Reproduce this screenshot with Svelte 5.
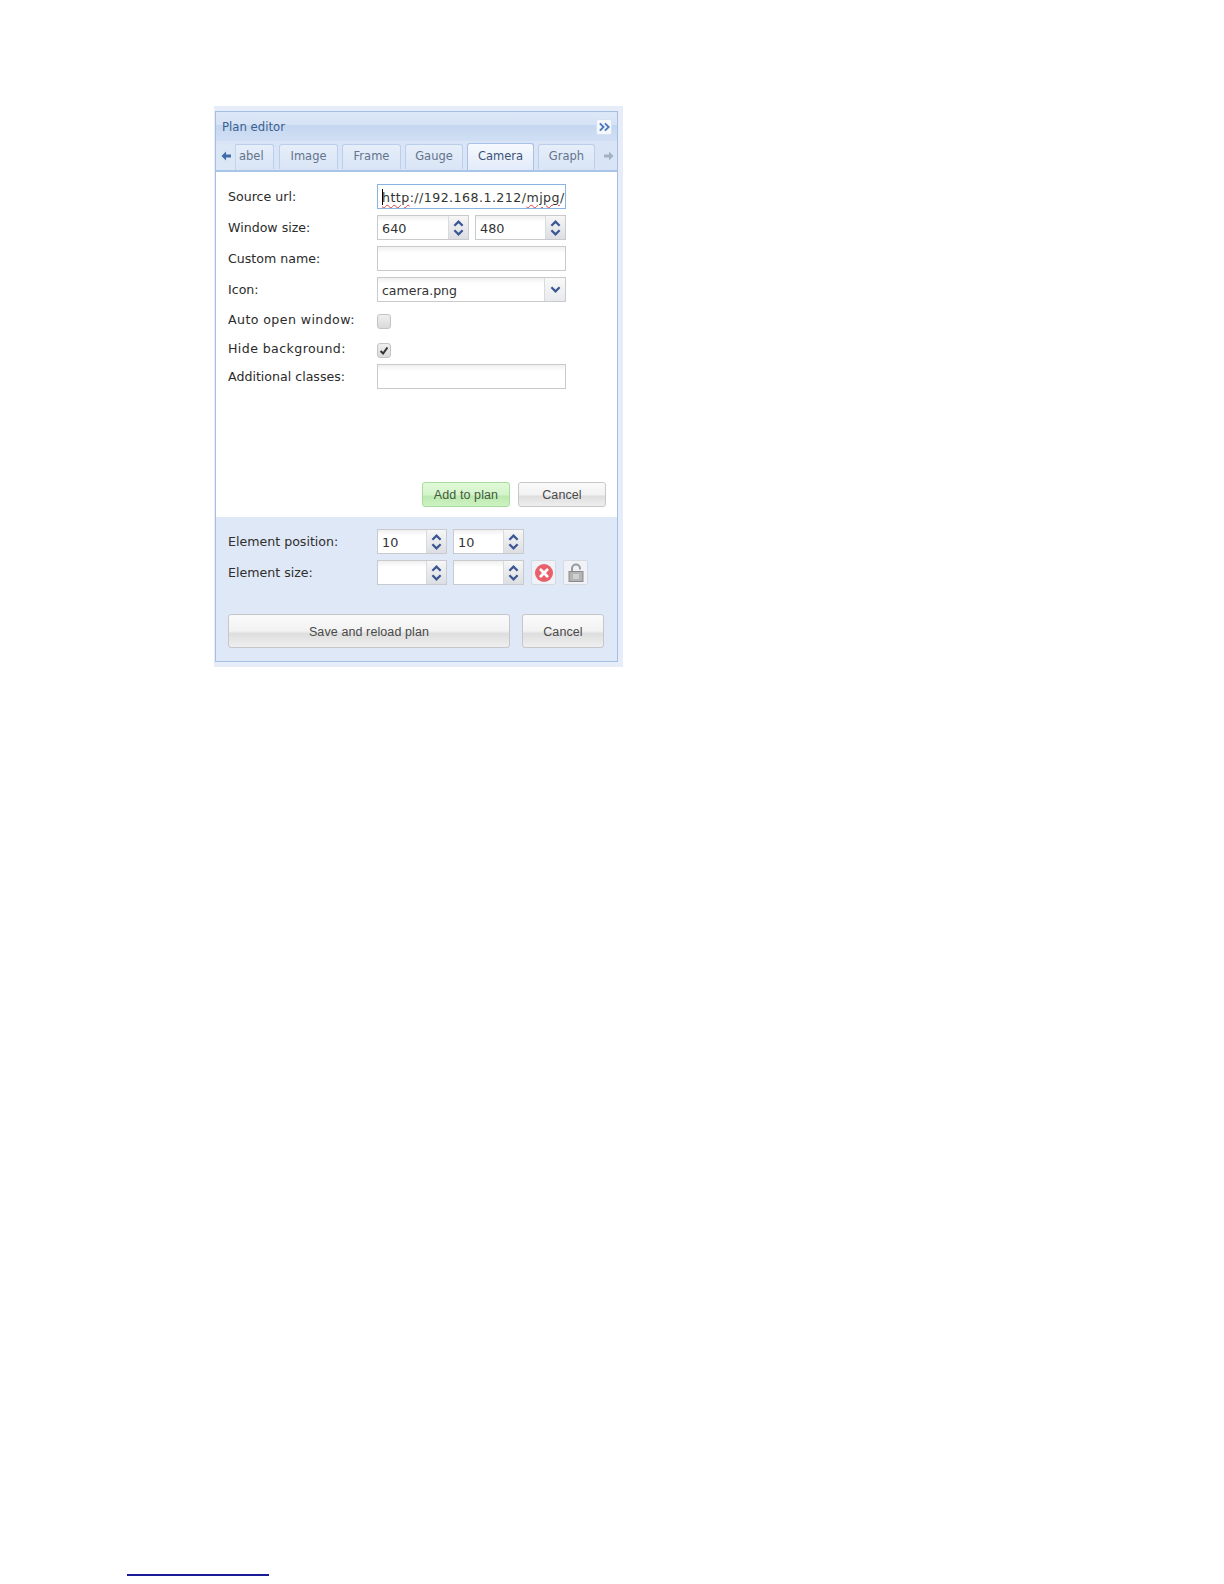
<script>
	const tabs = [
		{ label: 'abel', width: 38, clipped: true },
		{ label: 'Image', width: 59 },
		{ label: 'Frame', width: 59 },
		{ label: 'Gauge', width: 58 },
		{ label: 'Camera', width: 67, active: true },
		{ label: 'Graph', width: 57 }
	];
</script>

{#snippet spinner(value, width)}
	<span class="spinner" style="width: {width}px">
		<span class="spinner-value">{value}</span>
		<span class="spinner-arrows">
			<svg viewBox="0 0 12 9" class="arrow"><path d="M1.5 7 L6 2.5 L10.5 7" /></svg>
			<svg viewBox="0 0 12 9" class="arrow"><path d="M1.5 2 L6 6.5 L10.5 2" /></svg>
		</span>
	</span>
{/snippet}

<div class="page">
	<div class="halo">
		<div class="panel">
			<div class="title-bar">
				<span class="title">Plan editor</span>
				<button class="collapse" type="button" aria-label="Collapse">
					<svg viewBox="0 0 14 12"><path d="M2 2 L6 6 L2 10 M7.5 2 L11.5 6 L7.5 10" /></svg>
				</button>
			</div>

			<div class="tab-bar">
				<span class="scroll left">
					<svg viewBox="0 0 12 12"><path d="M6 1.5 L1.5 6 L6 10.5 V7.6 H11 V4.4 H6 Z" /></svg>
				</span>
				{#each tabs as tab}
					<span class="tab" class:active={tab.active} class:clipped={tab.clipped} style="width: {tab.width}px">{tab.label}</span>
				{/each}
				<span class="scroll right">
					<svg viewBox="0 0 12 12"><path d="M6 1.5 L10.5 6 L6 10.5 V7.6 H1 V4.4 H6 Z" /></svg>
				</span>
			</div>

			<div class="form">
				<div class="row">
					<span class="label">Source url:</span>
					<span class="input focused"><span class="caret"></span><span class="misspelled">http</span>://192.168.1.212/<span class="misspelled">mjpg</span>/</span>
				</div>
				<div class="row">
					<span class="label">Window size:</span>
					<span class="fields">
						{@render spinner('640', 92)}
						{@render spinner('480', 91)}
					</span>
				</div>
				<div class="row">
					<span class="label">Custom name:</span>
					<span class="input"></span>
				</div>
				<div class="row">
					<span class="label">Icon:</span>
					<span class="combo">
						<span class="combo-value">camera.png</span>
						<span class="combo-trigger">
							<svg viewBox="0 0 12 9" class="arrow"><path d="M1.5 2 L6 6.5 L10.5 2" /></svg>
						</span>
					</span>
				</div>
				<div class="row check-row">
					<span class="label">Auto open window:</span>
					<span class="checkbox"></span>
				</div>
				<div class="row check-row last-check">
					<span class="label">Hide background:</span>
					<span class="checkbox">
						<svg viewBox="0 0 14 14"><path d="M3 7.5 L6 10.5 L11 3.5" /></svg>
					</span>
				</div>
				<div class="row">
					<span class="label">Additional classes:</span>
					<span class="input"></span>
				</div>

				<div class="form-actions">
					<button class="button green" type="button">Add to plan</button>
					<button class="button cancel-small" type="button">Cancel</button>
				</div>
			</div>

			<div class="footer">
				<div class="row">
					<span class="label">Element position:</span>
					<span class="fields">
						{@render spinner('10', 70)}
						{@render spinner('10', 71)}
					</span>
				</div>
				<div class="row">
					<span class="label">Element size:</span>
					<span class="fields">
						{@render spinner('', 70)}
						{@render spinner('', 71)}
						<span class="icon-button first-icon">
							<svg viewBox="0 0 20 20">
								<circle cx="10" cy="10" r="9" fill="#e8606a" />
								<path d="M6.8 6.8 L13.2 13.2 M13.2 6.8 L6.8 13.2" stroke="#fff" stroke-width="2.8" stroke-linecap="round" />
							</svg>
						</span>
						<span class="icon-button">
							<svg viewBox="0 0 20 20">
								<path d="M6 9 V5.5 A4 4 0 0 1 14 5.5 V6.5" fill="none" stroke="#9a9a9a" stroke-width="2" />
								<rect x="3" y="8.5" width="14" height="10" fill="#b4b4b4" stroke="#8a8a8a" />
								<rect x="7" y="11" width="6" height="5" fill="#d0d0d0" />
							</svg>
						</span>
					</span>
				</div>

				<div class="footer-actions">
					<button class="button save" type="button">Save and reload plan</button>
					<button class="button cancel" type="button">Cancel</button>
				</div>
			</div>
		</div>
	</div>

	<div class="footnote-rule"></div>
</div>

<style>
	:global(body) {
		margin: 0;
		background: #fff;
	}

	.page {
		box-sizing: border-box;
		height: 1584px;
		padding: 106px 0 0 214px;
		font-family: "DejaVu Sans", sans-serif;
		position: relative;
	}

	.halo {
		box-sizing: border-box;
		width: 409px;
		height: 561px;
		padding: 5px 5px 5px 1px;
		background: #e6edf8;
	}

	.panel {
		box-sizing: border-box;
		height: 551px;
		border: 1px solid #a3bfe4;
		background: #dfe8f6;
		display: flex;
		flex-direction: column;
	}

	.title-bar {
		height: 29px;
		flex: none;
		box-sizing: border-box;
		padding: 0 5px 0 6px;
		display: flex;
		align-items: center;
		justify-content: space-between;
		background: linear-gradient(#dde8f7 0, #d6e3f5 44%, #c4d7f0 46%, #d0dff4 100%);
	}

	.title {
		font-size: 11.7px;
		color: #3c5f92;
		padding-top: 1px;
	}

	.collapse {
		width: 16px;
		height: 16px;
		padding: 0;
		border: 1px solid #d5e2f3;
		border-radius: 2px;
		background: #f4f8fd;
		display: flex;
		align-items: center;
		justify-content: center;
	}

	.collapse svg {
		width: 13px;
		height: 12px;
		fill: none;
		stroke: #4a78bd;
		stroke-width: 2;
	}

	.tab-bar {
		height: 31px;
		flex: none;
		box-sizing: border-box;
		display: flex;
		align-items: flex-end;
		gap: 4px;
		border-bottom: 2px solid #a9c4e8;
		background: #d9e5f6;
	}

	.scroll {
		width: 20px;
		height: 26px;
		flex: none;
		display: flex;
		align-items: center;
		justify-content: center;
		padding-bottom: 2px;
		box-sizing: border-box;
		background: #dce7f6;
	}

	.scroll svg {
		width: 12px;
		height: 12px;
	}

	.scroll.left {
		margin-right: -4px;
		border-right: 1px solid #c2d4ee;
	}

	.scroll.left svg {
		fill: #3f6ba8;
	}

	.scroll.right {
		background: none;
	}

	.scroll.right svg {
		fill: #a3b1c4;
	}

	.tab {
		box-sizing: border-box;
		height: 25px;
		flex: none;
		border: 1px solid #bccfea;
		border-bottom: none;
		border-radius: 3px 3px 0 0;
		margin-bottom: 1px;
		padding-bottom: 2px;
		background: linear-gradient(#e6eef9, #d9e5f6);
		color: #64748c;
		font-size: 11.5px;
		display: flex;
		align-items: center;
		justify-content: center;
	}

	.tab.clipped {
		border-left: none;
		border-radius: 0 3px 0 0;
		justify-content: flex-start;
		padding-left: 3px;
		margin-right: 1px;
	}

	.tab.active {
		height: 27px;
		margin-bottom: 0;
		padding-bottom: 2px;
		border-color: #a7c2e6;
		background: linear-gradient(#f6f9fe, #e2ebf9);
		color: #3c5378;
	}

	.form {
		flex: none;
		height: 345px;
		box-sizing: border-box;
		padding: 12px 11px 0 12px;
		background: #fff;
		display: flex;
		flex-direction: column;
	}

	.row {
		display: flex;
		align-items: center;
		height: 25px;
		margin-bottom: 6px;
	}

	.check-row {
		height: 15px;
		margin: 6px 0 8px;
	}

	.last-check {
		margin-bottom: 6px;
	}

	.label {
		width: 149px;
		flex: none;
		font-size: 12.6px;
		color: #2b2b2b;
	}

	.check-row .label {
		position: relative;
		top: -2px;
		letter-spacing: 0.4px;
	}

	.fields {
		display: flex;
		gap: 6px;
		align-items: center;
	}

	.input {
		box-sizing: border-box;
		width: 189px;
		height: 25px;
		border: 1px solid #c8cacd;
		background: linear-gradient(#f0f0f0, #fff 6px);
		padding-left: 4px;
		font-size: 12.5px;
		line-height: 25px;
		color: #333;
		white-space: nowrap;
		overflow: hidden;
		position: relative;
	}

	.input.focused {
		border-color: #8bb3df;
		background: #fff;
		letter-spacing: 0.45px;
		font-size: 12.6px;
	}

	.caret {
		position: absolute;
		left: 4px;
		top: 4px;
		width: 1px;
		height: 16px;
		background: #000;
	}

	.misspelled {
		text-decoration: underline wavy #e0403a 1px;
		text-underline-offset: 2px;
	}

	.spinner {
		box-sizing: border-box;
		height: 25px;
		display: flex;
		border: 1px solid #c8cacd;
		background: linear-gradient(#f0f0f0, #fff 6px);
		font-size: 12.8px;
		color: #333;
	}

	.spinner-value {
		flex: 1;
		padding-left: 4px;
		line-height: 25px;
	}

	.spinner-arrows {
		width: 19px;
		flex: none;
		display: flex;
		flex-direction: column;
		align-items: center;
		justify-content: center;
		border-left: 1px solid #d8dade;
		background: linear-gradient(#f6f6f6, #dcdee2);
	}

	.arrow {
		display: block;
		width: 11px;
		height: 9px;
		fill: none;
		stroke: #3a5693;
		stroke-width: 2.4;
	}

	.combo {
		box-sizing: border-box;
		width: 189px;
		height: 25px;
		display: flex;
		border: 1px solid #c8cacd;
		background: linear-gradient(#f0f0f0, #fff 6px);
		font-size: 12.5px;
		color: #333;
	}

	.combo-value {
		flex: 1;
		padding-left: 4px;
		line-height: 25px;
	}

	.combo-trigger {
		width: 20px;
		flex: none;
		display: flex;
		align-items: center;
		justify-content: center;
		border-left: 1px solid #d8dade;
		background: linear-gradient(#f8f8f8, #e8eaed);
	}

	.checkbox {
		box-sizing: border-box;
		width: 14px;
		height: 15px;
		border: 1px solid #c4c4c4;
		border-radius: 3px;
		background: linear-gradient(#efefef, #dadada);
		display: flex;
	}

	.checkbox svg {
		width: 12px;
		height: 13px;
		fill: none;
		stroke: #333;
		stroke-width: 2.4;
	}

	.form-actions {
		margin-top: auto;
		margin-bottom: 10px;
		display: flex;
		justify-content: flex-end;
		gap: 8px;
	}

	.button {
		box-sizing: border-box;
		height: 25px;
		padding: 0;
		border: 1px solid #c8c8c8;
		border-radius: 3px;
		font-family: "Liberation Sans", sans-serif;
		font-size: 12.5px;
		letter-spacing: 0.1px;
		color: #4a4a4a;
		background: linear-gradient(#fafafa 0, #f2f2f2 50%, #dedede 58%, #efefef 100%);
	}

	.green {
		width: 88px;
		border-color: #a8dc9c;
		color: #3f5c3c;
		background: linear-gradient(#e0f9d8 0, #d4f4ca 50%, #bde9b0 58%, #cdf2c2 100%);
	}

	.cancel-small {
		width: 88px;
	}

	.footer {
		flex: 1;
		box-sizing: border-box;
		padding: 12px 11px 0 12px;
	}

	.footer .label {
		color: #2f2f2f;
	}

	.icon-button {
		box-sizing: border-box;
		width: 25px;
		height: 25px;
		margin-left: 1px;
		border: 1px solid #d6dae0;
		border-radius: 2px;
		background: #eff2f7;
		display: flex;
		align-items: center;
		justify-content: center;
	}

	.first-icon {
		margin-left: 1px;
	}

	.icon-button svg {
		width: 20px;
		height: 20px;
	}

	.footer-actions {
		display: flex;
		gap: 12px;
		margin-top: 29px;
	}

	.save,
	.cancel {
		height: 34px;
		padding-top: 1px;
		border-color: #c4c6ca;
	}

	.save {
		width: 282px;
	}

	.cancel {
		width: 82px;
	}

	.footnote-rule {
		position: absolute;
		left: 127px;
		top: 1574px;
		width: 142px;
		height: 2px;
		background: #1a1a96;
	}
</style>
